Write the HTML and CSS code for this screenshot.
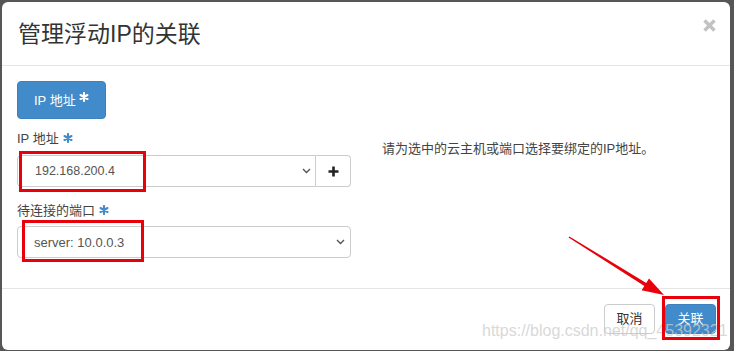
FILE: index.html
```html
<!DOCTYPE html>
<html lang="zh-CN">
<head>
    <meta charset="UTF-8">
    <title>管理浮动IP的关联</title>
    <link rel="stylesheet" href="styles.css">
</head>
<body>
    <div class="modal">
        <div class="modal-header">
            <h4 class="modal-title">管理浮动IP的关联</h4>
            <span class="close">
                <svg width="13" height="13" viewBox="0 0 13 13"><path d="M1.5 1.5L11.5 11.5M11.5 1.5L1.5 11.5" stroke="#c2c2c2" stroke-width="3.4"/></svg>
            </span>
        </div>

        <div class="modal-body">
            <button class="btn btn-primary tab-btn">IP 地址 <svg class="req" viewBox="-5 -5 10 10"><path d="M0 -4V4M-3.46 -2L3.46 2M-3.46 2L3.46 -2" stroke="#fff" stroke-width="2.1" stroke-linecap="round"/></svg></button>

            <div class="form-row">
                <div class="form-col">
                    <div class="form-group">
                        <label>IP 地址 <svg class="req" viewBox="-5 -5 10 10"><path d="M0 -4V4M-3.46 -2L3.46 2M-3.46 2L3.46 -2" stroke="#428bca" stroke-width="2.1" stroke-linecap="round"/></svg></label>
                        <div class="input-group">
                            <div class="select">
                                <span>192.168.200.4</span>
                                <svg class="chevron" width="9" height="6" viewBox="0 0 9 6"><path d="M1 1L4.5 4.5L8 1" fill="none" stroke="#555" stroke-width="1.4"/></svg>
                            </div>
                            <span class="addon">
                                <svg width="11" height="11" viewBox="0 0 11 11"><path d="M5.5 0.5V10.5M0.5 5.5H10.5" stroke="#222" stroke-width="2.6"/></svg>
                            </span>
                        </div>
                    </div>
                    <div class="form-group">
                        <label>待连接的端口 <svg class="req" viewBox="-5 -5 10 10"><path d="M0 -4V4M-3.46 -2L3.46 2M-3.46 2L3.46 -2" stroke="#428bca" stroke-width="2.1" stroke-linecap="round"/></svg></label>
                        <div class="select single">
                            <span>server: 10.0.0.3</span>
                            <svg class="chevron" width="9" height="6" viewBox="0 0 9 6"><path d="M1 1L4.5 4.5L8 1" fill="none" stroke="#555" stroke-width="1.4"/></svg>
                        </div>
                    </div>
                </div>
                <p class="help">请为选中的云主机或端口选择要绑定的IP地址。</p>
            </div>
        </div>

        <div class="modal-footer">
            <button class="btn btn-default">取消</button>
            <button class="btn btn-primary">关联</button>
        </div>
    </div>

    <!-- 截图上的水印 -->
    <div class="watermark">https://blog.csdn.net/qq_45392321</div>

    <!-- 红色标注 -->
    <svg class="marks" width="734" height="351" viewBox="0 0 734 351">
        <rect x="20.5" y="152.5" width="124" height="38" fill="none" stroke="#e8000b" stroke-width="3"/>
        <rect x="23.5" y="221.5" width="119" height="39" fill="none" stroke="#e8000b" stroke-width="3"/>
        <rect x="663.5" y="297.5" width="55" height="41" fill="none" stroke="#e8000b" stroke-width="3"/>
        <polygon points="568.6,237.6 569.4,236.4 646.2,282.9 649,278.5 664,295 641.6,290.3 644.4,285.9" fill="#e8000b"/>
    </svg>
</body>
</html>
```

FILE: styles.css
```css
body {
    margin: 0;
    width: 734px;
    height: 351px;
    overflow: hidden;
    position: relative;
    background: #565656;
    font-family: "Liberation Sans", "Noto Sans CJK SC", sans-serif;
    color: #333;
}

.modal {
    margin: 2px 0 0 2px;
    width: 728px;
    background: #fff;
    border-radius: 6px;
}

/* ヘッダー */
.modal-header {
    display: flex;
    justify-content: space-between;
    padding: 20px 14px 18px 16px;
    border-bottom: 1px solid #e5e5e5;
}

.modal-title {
    margin: 0;
    font-size: 23px;
    line-height: 25px;
    font-weight: normal;
    color: #333;
}

.close {
    align-self: flex-start;
    margin-top: -3px;
    line-height: 0;
}

/* 本体 */
.modal-body {
    padding: 15px 15px 30px;
}

.btn {
    font-family: inherit;
    font-size: 13px;
    line-height: 20px;
    height: 30px;
    padding: 0 12px;
    border-radius: 4px;
    border: 1px solid transparent;
    cursor: pointer;
}

.btn-primary {
    background: #428bca;
    border-color: #3c80bd;
    color: #fff;
}

.btn-default {
    background: #fff;
    border-color: #ccc;
    color: #333;
}

.tab-btn {
    display: flex;
    align-items: flex-start;
    gap: 3px;
    height: 38px;
    padding: 9px 16px;
}

.req {
    width: 10px;
    height: 10px;
    margin-top: 1px;
}

.form-row {
    display: grid;
    grid-template-columns: 334px 1fr;
    column-gap: 31px;
    margin-top: 10px;
}

.form-group {
    margin-bottom: 14px;
}

.form-group:last-child {
    margin-bottom: 0;
}

label {
    display: flex;
    align-items: flex-start;
    gap: 4px;
    font-size: 13px;
    line-height: 20px;
    color: #444;
    margin-bottom: 6px;
}

.form-group:last-child label {
    margin-bottom: 5px;
}

label .req {
    margin-top: 4px;
}

.input-group {
    display: flex;
    height: 32px;
}

.select {
    flex: 1;
    display: flex;
    align-items: center;
    justify-content: space-between;
    padding: 0 4px 0 17px;
    border: 1px solid #ccc;
    border-radius: 4px 0 0 4px;
    font-size: 12.5px;
    color: #555;
}

.select.single {
    height: 30px;
    border-radius: 4px;
    padding: 0 5px 0 16px;
    font-size: 13px;
}

.addon {
    width: 34px;
    display: flex;
    align-items: center;
    justify-content: center;
    border: 1px solid #ccc;
    border-left: none;
    border-radius: 0 4px 4px 0;
}

.help {
    margin: 11px 0 0;
    font-size: 13px;
    line-height: 18px;
    color: #444;
}

/* フッター */
.modal-footer {
    display: flex;
    justify-content: flex-end;
    gap: 10px;
    padding: 15px 14px 16px;
    border-top: 1px solid #e5e5e5;
}

.modal-footer .btn {
    width: 51px;
    padding: 0;
}

.watermark {
    position: absolute;
    left: 482px;
    top: 323px;
    font-size: 16px;
    line-height: 16px;
    color: rgba(203, 203, 203, 0.76);
    white-space: nowrap;
}

.marks {
    position: absolute;
    left: 0;
    top: 0;
}
```
